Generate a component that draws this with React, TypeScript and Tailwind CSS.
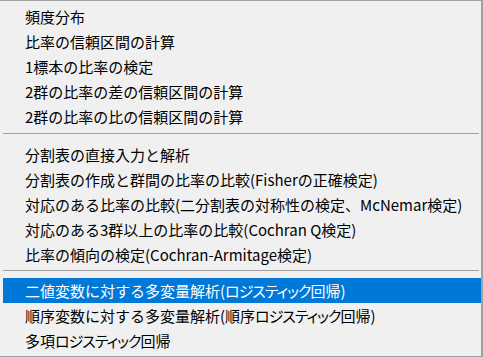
import React from "react";

const group1 = [
  "頻度分布",
  "比率の信頼区間の計算",
  "1標本の比率の検定",
  "2群の比率の差の信頼区間の計算",
  "2群の比率の比の信頼区間の計算",
];
const group2 = [
  "分割表の直接入力と解析",
  "分割表の作成と群間の比率の比較(Fisherの正確検定)",
  "対応のある比率の比較(二分割表の対称性の検定、McNemar検定)",
  "対応のある3群以上の比率の比較(Cochran Q検定)",
  "比率の傾向の検定(Cochran-Armitage検定)",
];
const group3 = [
  "二値変数に対する多変量解析(ロジスティック回帰)",
  "順序変数に対する多変量解析(順序ロジスティック回帰)",
  "多項ロジスティック回帰",
];

function renderLabel(label: string) {
  const parts = label.split(/([ァ-ヶー]+)/);
  return parts.map((p, i) =>
    /^[ァ-ヶー]+$/.test(p) ? (
      <span key={i} className="[font-feature-settings:'palt'] tracking-[-1px]">
        {p}
      </span>
    ) : (
      <React.Fragment key={i}>{p}</React.Fragment>
    )
  );
}

function Item({ label, active }: { label: string; active?: boolean }) {
  return (
    <div
      className={
        "h-[25px] flex items-center pl-[22px] whitespace-nowrap " +
        (active ? "bg-[#0078d7] text-white" : "text-black")
      }
    >
      <span>{renderLabel(label)}</span>
    </div>
  );
}

export default function App() {
  return (
    <div
      className="w-[483px] h-[357px] bg-[#f0f0f0] border-t border-b border-r-2 border-[#a0a0a0] pl-[3px] pt-[3px] text-[15px] leading-none overflow-hidden font-['Noto_Sans_CJK_JP','Noto_Sans',sans-serif]"
    >
      {group1.map((l) => (
        <Item key={l} label={l} />
      ))}
      <div className="pt-[4px] pb-[8px] pr-[2px]">
        <div className="h-px bg-[#a0a0a0]" />
      </div>
      {group2.map((l) => (
        <Item key={l} label={l} />
      ))}
      <div className="pt-[3px] pb-[7px] pr-[2px]">
        <div className="h-px bg-[#a0a0a0]" />
      </div>
      {group3.map((l, i) => (
        <Item key={l} label={l} active={i === 0} />
      ))}
    </div>
  );
}
